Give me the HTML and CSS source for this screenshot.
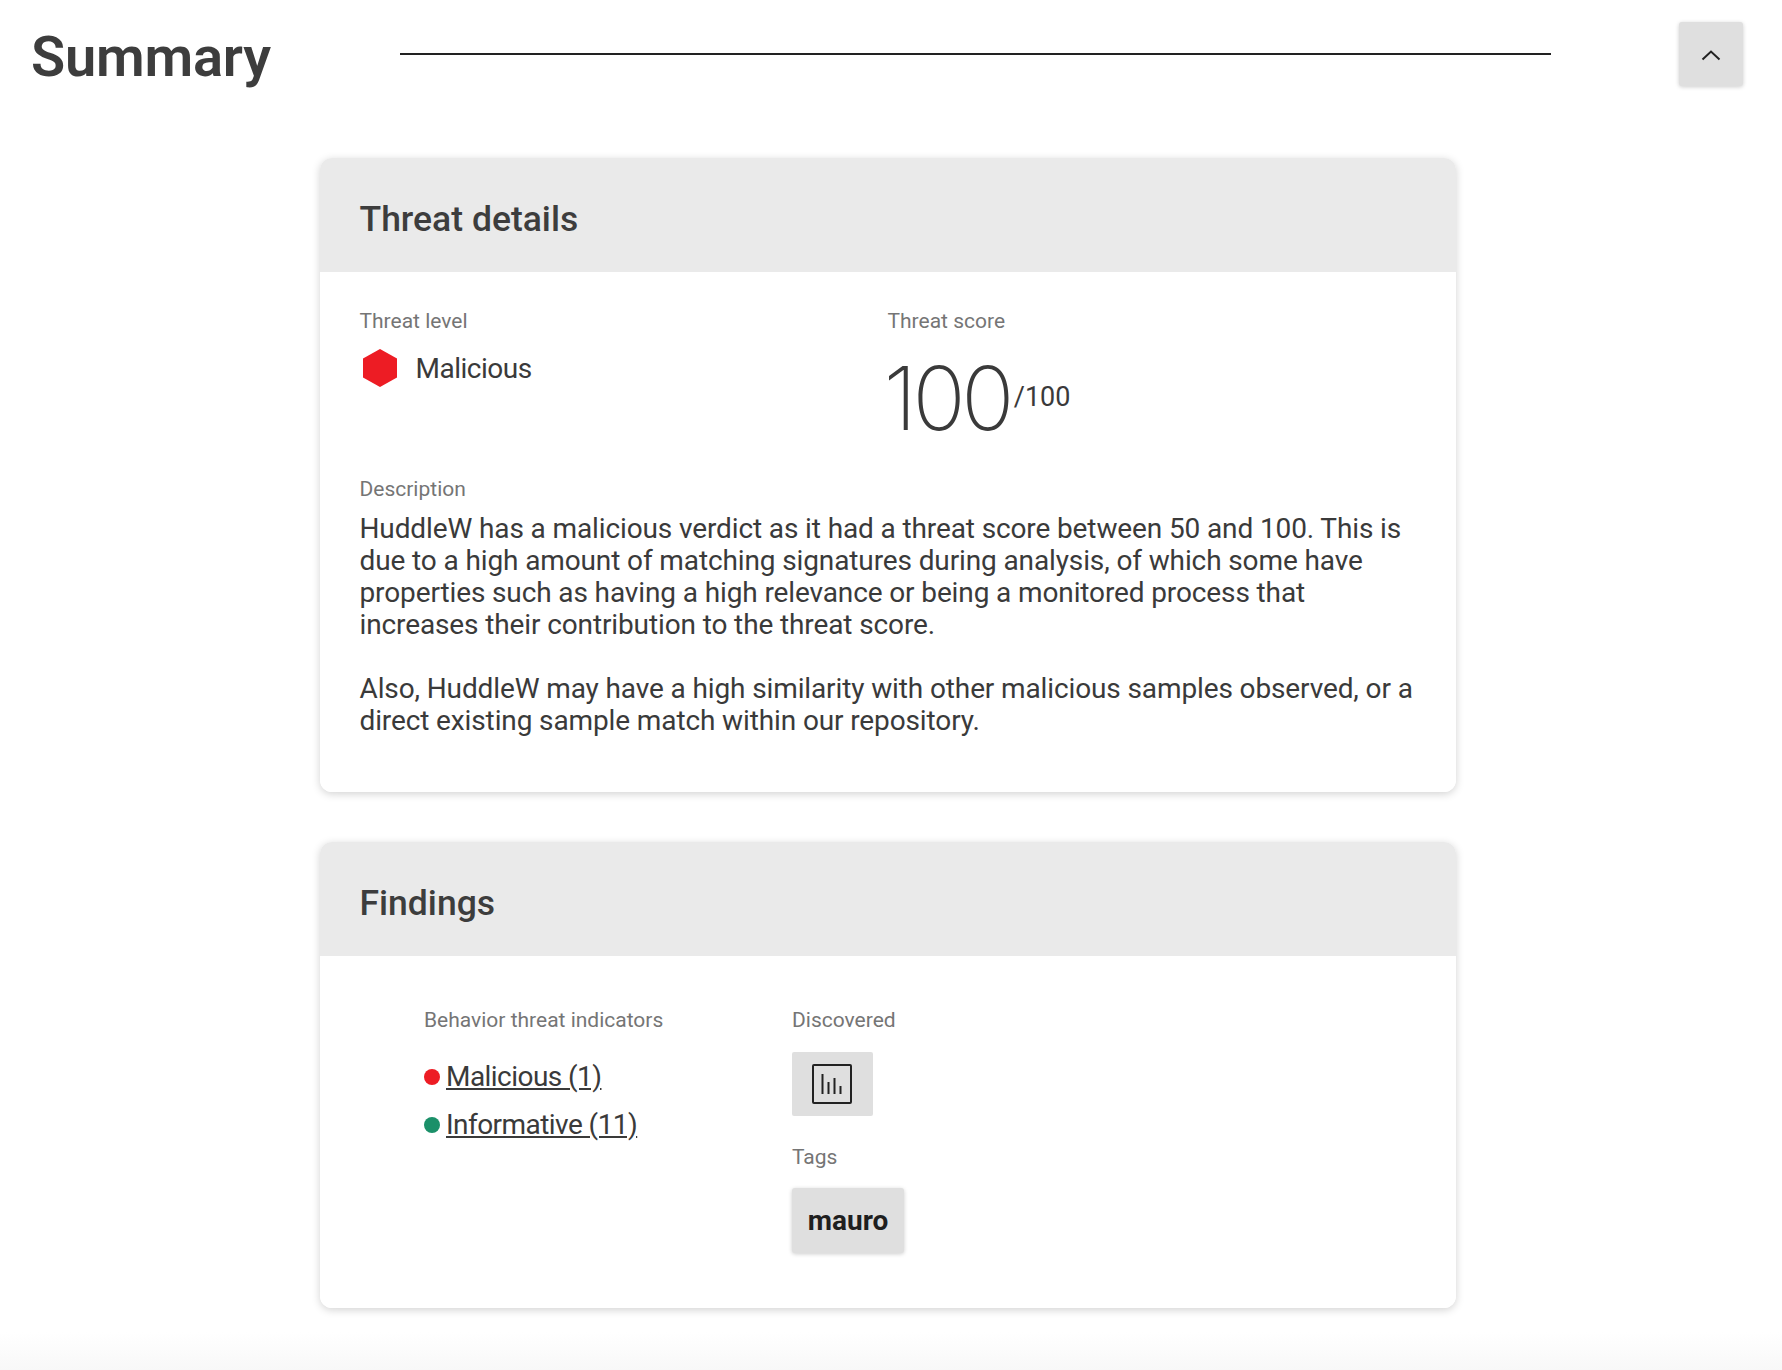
FILE: index.html
```html
<!DOCTYPE html>
<html lang="en">
<head>
<meta charset="utf-8">
<title>Summary</title>
<link rel="stylesheet" href="styles.css">
</head>
<body>
<header class="top">
  <h1 class="title">Summary</h1>
  <div class="rule"></div>
  <button class="collapse" type="button" aria-label="Collapse">
    <svg width="20" height="12" viewBox="0 0 20 12"><path d="M1.5 10.5 L10 2.5 L18.5 10.5" fill="none" stroke="#222" stroke-width="2"/></svg>
  </button>
</header>
<main class="cards">
  <section class="card">
    <h2 class="card-head">Threat details</h2>
    <div class="card-body details">
      <div class="facts">
        <div class="fact">
          <div class="label">Threat level</div>
          <div class="level">
            <svg width="34" height="38" viewBox="0 0 34 38"><polygon points="17,0 34,9.5 34,28.5 17,38 0,28.5 0,9.5" fill="#ed1c24"/></svg>
            <span>Malicious</span>
          </div>
        </div>
        <div class="fact">
          <div class="label">Threat score</div>
          <div class="score"><span class="score-big">100</span><span class="score-max">/100</span></div>
        </div>
      </div>
      <div class="label">Description</div>
      <p class="desc">HuddleW has a malicious verdict as it had a threat score between 50 and 100. This is due to a high amount of matching signatures during analysis, of which some have properties such as having a high relevance or being a monitored process that increases their contribution to the threat score.</p>
      <p class="desc desc-last">Also, HuddleW may have a high similarity with other malicious samples observed, or a direct existing sample match within our repository.</p>
    </div>
  </section>
  <section class="card">
    <h2 class="card-head">Findings</h2>
    <div class="card-body findings">
      <div class="col-ind">
        <div class="label">Behavior threat indicators</div>
        <ul class="indicators">
          <li><span class="dot dot-red"></span><a href="#">Malicious (1)</a></li>
          <li><span class="dot dot-green"></span><a href="#">Informative (11)</a></li>
        </ul>
      </div>
      <div class="col-disc">
        <div class="label">Discovered</div>
        <div class="disc-tile">
          <svg width="40" height="40" viewBox="0 0 40 40" fill="none" stroke="#222"><rect x="1" y="1" width="38" height="38" rx="1" stroke-width="2"/><path d="M10.500 10v20M16.500 18v12M22.500 14v16M28.500 22v8" stroke-width="2"/></svg>
        </div>
        <div class="label">Tags</div>
        <div class="tag">mauro</div>
      </div>
    </div>
  </section>
</main>
<div class="fade"></div>
</body>
</html>
```
FILE: styles.css
```css
* { box-sizing: border-box; }
html, body { margin: 0; padding: 0; background: #fff; }
body { font-family: Roboto, "Liberation Sans", sans-serif; color: #3a3a3a; height: 1370px; overflow: hidden; display: flex; flex-direction: column; }
.top { display: flex; align-items: flex-start; height: 158px; padding: 22px 39px 0 31px; flex: none; }
.title { margin: 3px 0 0; width: 369px; font-size: 56px; line-height: 64px; font-weight: 600; letter-spacing: -.2px; color: #3d3d3d; }
.rule { width: 1151px; height: 2px; background: #222; margin-top: 31px; }
.collapse { margin-left: auto; width: 64px; height: 64px; border: 0; border-radius: 3px; background: #dfdfdf; box-shadow: 0 1px 4px rgba(0,0,0,.2); display: flex; align-items: center; justify-content: center; padding: 2px 0 0; }
.cards { display: flex; flex-direction: column; gap: 50px; padding-left: 320px; flex: none; }
.card { width: 1136px; border-radius: 12px; background: #fff; box-shadow: 0 2px 8px rgba(0,0,0,.18); overflow: hidden; }
.card-head { margin: 0; height: 114px; background: #eaeaea; padding: 7px 39.500px 0; display: flex; align-items: center; font-size: 35.500px; font-weight: 500; color: #3d3d3d; }
.card-body { background: #fff; }
.details { padding: 37px 39.500px 0; height: 520px; }
.facts { display: flex; height: 168px; }
.fact { width: 528px; }
.label { font-size: 21px; line-height: 24px; color: #757575; }
.level { display: flex; align-items: center; gap: 19px; margin-top: 16px; font-size: 28px; letter-spacing: -.5px; padding-left: 3px; }
.score { display: flex; align-items: center; margin-top: 24px; line-height: 80px; margin-left: -4px; }
.score-big { font-family: Inter, Roboto, sans-serif; font-size: 88px; font-weight: 200; color: #3a3a3a; letter-spacing: -4.500px; }
.score-max { font-size: 27px; font-weight: 400; margin: 0 0 2px 4px; }
.desc { margin: 0; padding-top: 12px; font-size: 28px; line-height: 32px; letter-spacing: -.12px; }
.desc-last { padding-top: 32px; }
.findings { display: flex; height: 352px; padding: 52px 0 0 104px; }
.col-ind { width: 368px; }
.indicators { list-style: none; margin: 20px 0 0; padding: 0; }
.indicators li { display: flex; align-items: center; gap: 6px; height: 48px; font-size: 28px; letter-spacing: -.55px; }
.indicators a { color: #3a3a3a; }
.dot { width: 16px; height: 16px; border-radius: 50%; margin-top: 2px; }
.dot-red { background: #ed1c24; }
.dot-green { background: #1b9069; }
.disc-tile { width: 81px; height: 64px; margin: 20px 0 29px; padding-right: 2px; background: #dfdfdf; border-radius: 2px; display: flex; align-items: center; justify-content: center; }
.tag { width: 112px; height: 65px; margin-top: 19px; border-radius: 3px; background: #dfdfdf; box-shadow: 0 1px 4px rgba(0,0,0,.2); display: flex; align-items: center; justify-content: center; font-size: 28px; font-weight: 700; color: #1f1f1f; }
.fade { flex: 1; margin-top: 24px; background: linear-gradient(#fff, #f8f8f8); }
```
